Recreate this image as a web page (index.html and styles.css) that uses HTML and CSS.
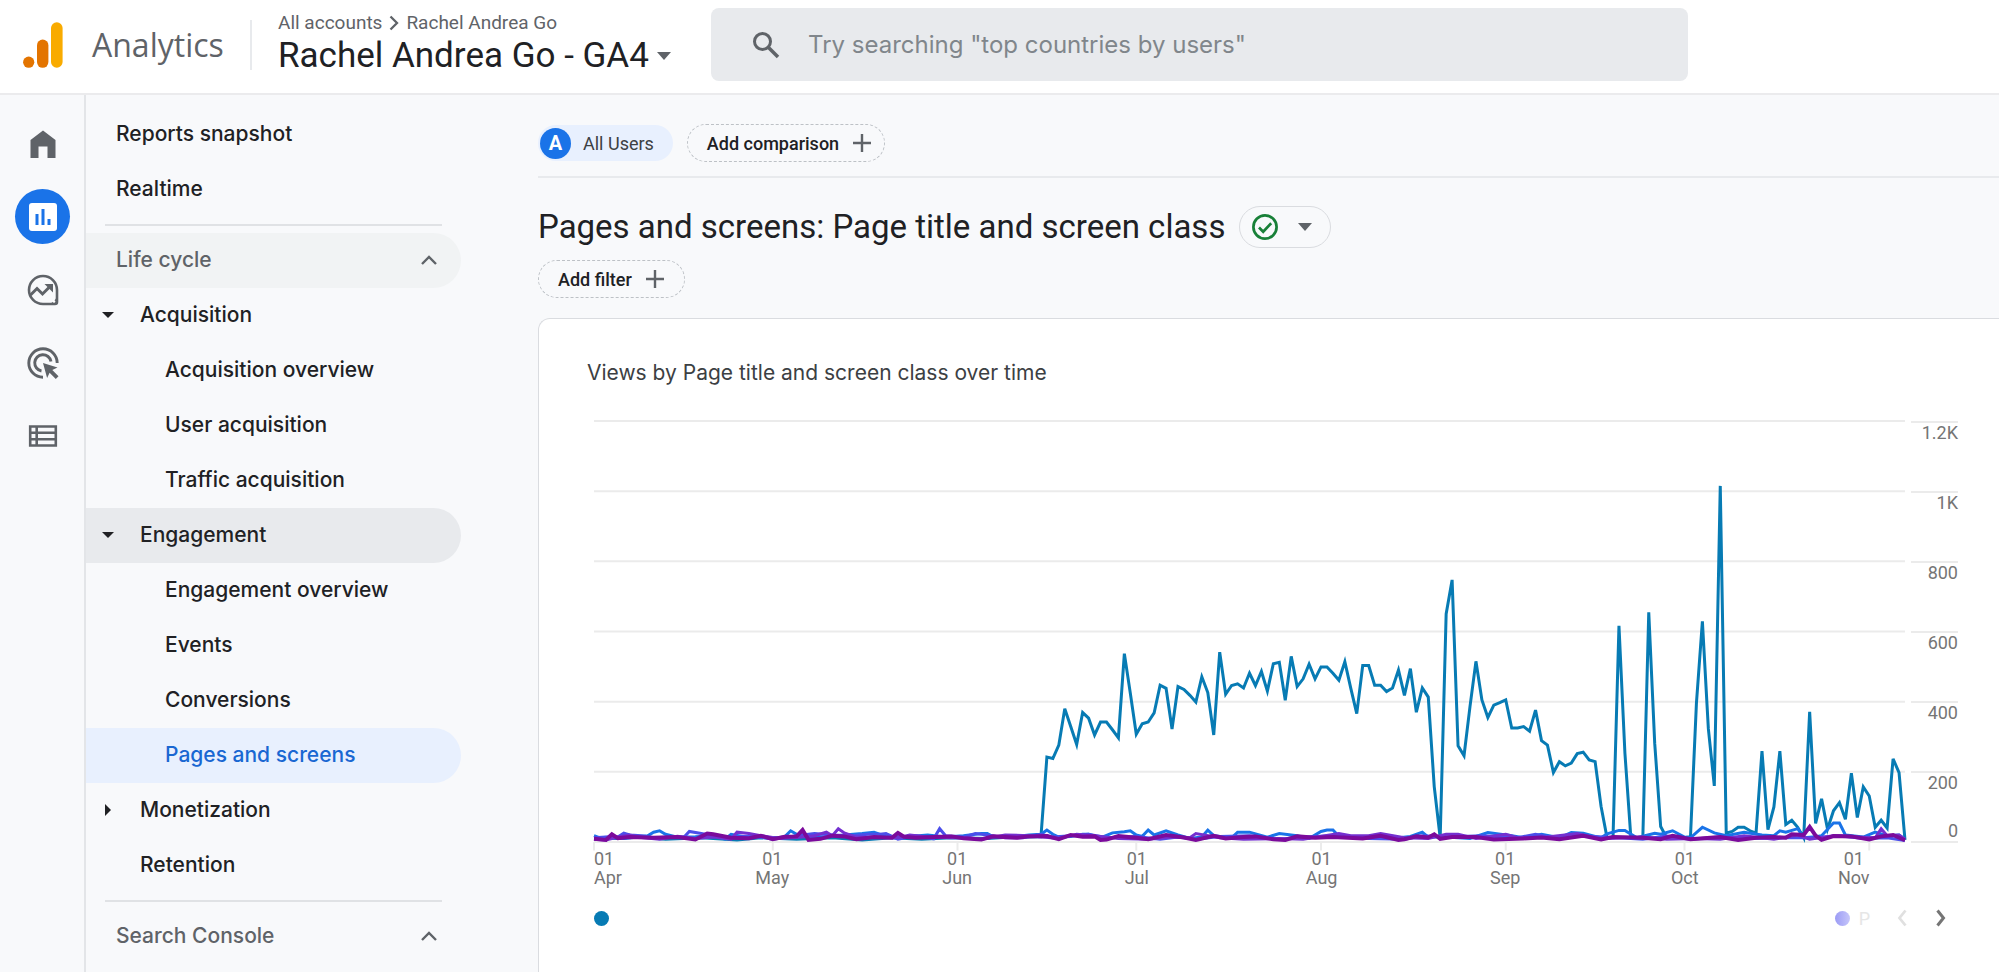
FILE: index.html
```html
<!DOCTYPE html>
<html lang="en">
<head>
<meta charset="utf-8">
<title>Analytics</title>
<link rel="stylesheet" href="styles.css">
</head>
<body>
<header class="topbar">
  <a class="brand" href="#">
    <svg class="logo" viewBox="0 0 40 46" aria-hidden="true"><circle cx="5.7" cy="40.2" r="5.6" fill="#e37400"/><rect x="14" y="17.5" width="11.4" height="28.3" rx="5.7" fill="#e37400"/><rect x="28" y="0.3" width="11.6" height="45.5" rx="5.8" fill="#f9ab00"/></svg>
    <span class="brand-name">Analytics</span>
  </a>
  <div class="account">
    <div class="crumbs"><span>All accounts</span><svg class="crumb-arrow" viewBox="0 0 10 16" aria-hidden="true"><path d="M1.5 1.5 8 8l-6.500 6.500" fill="none" stroke="#5f6368" stroke-width="2.300"/></svg><span>Rachel Andrea Go</span></div>
    <button class="property">Rachel Andrea Go - GA4<svg class="caret" viewBox="0 0 14 8" aria-hidden="true"><path d="M0 0h14L7 8z" fill="#5f6368"/></svg></button>
  </div>
  <label class="search">
    <svg class="search-icon" viewBox="0 0 28 28" aria-hidden="true"><circle cx="10.500" cy="10.500" r="8" fill="none" stroke="#5f6368" stroke-width="3"/><path d="M16.500 16.500 26 26" stroke="#5f6368" stroke-width="3.600"/></svg>
    <input type="search" aria-label="Search" placeholder="Try searching &quot;top countries by users&quot;">
  </label>
</header>
<div class="body">
  <nav class="rail" aria-label="Sections">
    <a class="rail-item" href="#" aria-label="Home"><svg class="rail-icon" viewBox="0 0 32 32"><path d="M3.500 12 16 2.500 28.500 12v18H20.500V18.500h-9V30h-8z" fill="#5f6368"/></svg></a>
    <a class="rail-item is-active" href="#" aria-label="Reports"><svg class="rail-icon" viewBox="0 0 32 32"><rect x="2" y="2" width="28" height="28" rx="3" fill="#fff"/><path d="M8.500 13h3v11h-3zM14.500 8h3v16h-3zM20.500 18h3v6h-3z" fill="#1a73e8"/></svg></a>
    <a class="rail-item" href="#" aria-label="Explore"><svg class="rail-icon" viewBox="0 0 32 32"><path d="M30 16v12q0 2-2 2H16A14 14 0 1 1 30 16z" fill="none" stroke="#5f6368" stroke-width="2.600"/><path d="M22 30q6-2 8-8v8z" fill="#5f6368"/><circle cx="27" cy="27.500" r="1.300" fill="#fff"/><path d="M3.500 21 10 14.500l5.500 5.500 7.500-7.500" fill="none" stroke="#5f6368" stroke-width="3"/><path d="M17.500 10H26v8.500z" fill="#5f6368"/></svg></a>
    <a class="rail-item" href="#" aria-label="Advertising"><svg class="rail-icon" viewBox="0 0 32 32"><g fill="none" stroke="#5f6368" stroke-width="2.900"><path d="M30.200 16A14.200 14.200 0 1 0 16 30.200"/><path d="M24 14.500A8.200 8.200 0 1 0 14.500 24"/></g><path d="m16 16 14.500 4.500-5.200 2.500 6.200 6.200-2.700 2.700-6.200-6.200-2.500 5.300z" fill="#5f6368"/></svg></a>
    <a class="rail-item" href="#" aria-label="Configure"><svg class="rail-icon" viewBox="0 0 32 32"><path d="M3.200 6.500h25.600v19H3.200zM3 12.800h26M3 19.200h26M9.700 6v20" fill="none" stroke="#5f6368" stroke-width="2.600"/></svg></a>
  </nav>
  <nav class="menu" aria-label="Reports">
    <a class="row" href="#">Reports snapshot</a>
    <a class="row" href="#">Realtime</a>
    <hr class="rule">
    <button class="row group shaded">Life cycle<svg class="chev" viewBox="0 0 16 10" aria-hidden="true"><path d="M1 9l7-7 7 7" fill="none" stroke="#5f6368" stroke-width="2.400"/></svg></button>
    <button class="row topic"><svg class="tri" viewBox="0 0 12 12" aria-hidden="true"><path d="M0 3h12L6 9z" fill="#202124"/></svg>Acquisition</button>
    <a class="row leaf" href="#">Acquisition overview</a>
    <a class="row leaf" href="#">User acquisition</a>
    <a class="row leaf" href="#">Traffic acquisition</a>
    <button class="row topic open"><svg class="tri" viewBox="0 0 12 12" aria-hidden="true"><path d="M0 3h12L6 9z" fill="#202124"/></svg>Engagement</button>
    <a class="row leaf" href="#">Engagement overview</a>
    <a class="row leaf" href="#">Events</a>
    <a class="row leaf" href="#">Conversions</a>
    <a class="row leaf current" href="#" aria-current="page">Pages and screens</a>
    <button class="row topic"><svg class="tri" viewBox="0 0 12 12" aria-hidden="true"><path d="M3 0v12l6-6z" fill="#202124"/></svg>Monetization</button>
    <a class="row sub" href="#">Retention</a>
    <hr class="rule">
    <button class="row group">Search Console<svg class="chev" viewBox="0 0 16 10" aria-hidden="true"><path d="M1 9l7-7 7 7" fill="none" stroke="#5f6368" stroke-width="2.400"/></svg></button>
  </nav>
  <main class="main">
    <div class="compare">
      <button class="segment"><span class="badge">A</span>All Users</button>
      <button class="add">Add comparison<svg class="plus" viewBox="0 0 20 20" aria-hidden="true"><path d="M10 1v18M1 10h18" stroke="#5f6368" stroke-width="2.400"/></svg></button>
    </div>
    <div class="heading">
      <h1>Pages and screens: Page title and screen class</h1>
      <button class="status" aria-label="Data quality"><svg class="check" viewBox="0 0 26 26" aria-hidden="true"><circle cx="13" cy="13" r="11.600" fill="none" stroke="#188038" stroke-width="2.700"/><path d="m7 13.500 4.200 4.200 8-8.500" fill="none" stroke="#188038" stroke-width="2.700"/></svg><svg class="caret" viewBox="0 0 14 8" aria-hidden="true"><path d="M0 0h14L7 8z" fill="#5f6368"/></svg></button>
    </div>
    <button class="add filter">Add filter<svg class="plus" viewBox="0 0 20 20" aria-hidden="true"><path d="M10 1v18M1 10h18" stroke="#5f6368" stroke-width="2.400"/></svg></button>
    <section class="card">
      <h2>Views by Page title and screen class over time</h2>
      <div class="chart">
        <div class="plot">
          <svg class="lines" viewBox="0 0 220 1200" preserveAspectRatio="none" role="img" aria-label="Views over time">
            <path class="grid" d="M0 0H220M0 200H220M0 400H220M0 600H220M0 800H220M0 1000H220M0 1200H220"/>
            <path class="grid" d="M0 1200v24M30 1200v24M61 1200v24M91 1200v24M122 1200v24M153 1200v24M183 1200v24M214 1200v24"/>
            <g transform="matrix(1 0 0 -1 0 1200)">
              <polyline class="s teal" points="0 12 4 10 8 14 12 8 18 12 24 6 28 12 34 8 40 12 45 6 50 12 55 8 60 12 66 10 70 14 75 15 76 242 77 238 78 276 79 380 80 329 81 278 82 369 83 353 84 305 85 342 86 342 87 320 88 297 89 537 90 424 91 307 92 337 93 342 94 368 95 447 96 438 97 322 98 443 99 435 100 418 101 399 102 471 103 426 104 305 105 541 106 421 107 446 108 451 109 439 110 481 111 446 112 486 113 430 114 508 115 512 116 404 117 529 118 443 119 465 120 507 121 465 122 499 123 499 124 481 125 461 126 514 127 438 128 366 129 503 130 503 131 447 132 447 133 429 134 439 135 490 136 418 137 494 138 370 139 439 140 413 141 158 142 12 143 650 144 747 145 274 146 246 147 386 148 515 149 405 150 355 151 390 152 397 153 405 154 325 155 325 156 329 157 316 158 376 159 289 160 276 161 198 162 229 163 217 164 225 165 252 166 256 167 234 168 229 169 101 170 12 171 12 172 616 173 253 174 12 175 10 176 10 177 655 178 281 179 44 180 12 182 10 184 15 185 396 186 629 187 323 188 160 189 1015 190 25 191 30 192 42 193 42 194 32 195 25 196 259 197 35 198 100 199 259 200 50 201 62 202 42 203 12 204 371 205 53 206 123 207 37 208 89 209 112 210 65 211 196 212 70 213 157 214 131 215 42 216 62 217 40 218 237 219 198 220 6"/>
              <polyline class="s blue" points="0 18 1 12 3 14 5 10 7 14 9 18 10 28 11 32 12 22 14 14 17 15 20 18 22 8 23 22 25 16 28 14 31 12 32 15 33 32 34 22 36 16 39 14 42 20 45 24 47 28 49 16 52 14 56 20 59 14 62 18 65 24 66 24 67 15 70 14 73 20 75 22 76 34 77 22 78 14 80 16 82 22 83 22 85 12 87 26 89 29 90 32 91 20 92 16 93 34 94 20 96 32 98 20 100 10 102 14 103 34 104 18 107 12 108 28 110 28 113 14 115 24 118 18 120 10 122 30 123 34 124 34 125 16 128 12 132 20 134 10 137 16 139 28 140 14 143 14 147 10 150 27 154 18 156 12 159 22 162 12 164 27 166 25 168 16 169 12 170 23 172 33 173 33 175 12 178 25 179 22 181 32 183 14 184 12 186 42 188 26 190 18 193 28 196 20 198 18 199 32 200 28 202 38 203 12 205 15 206 18 208 54 209 54 210 20 213 14 215 28 217 18 219 20 220 8"/>
              <polyline class="s indigo" points="0 12 2 14 4 14 5 25 6 20 8 18 10 12 13 14 15 12 16 30 18 24 20 18 22 12 25 16 28 14 30 8 34 18 37 24 40 20 43 18 46 22 48 22 49 24 51 8 54 18 57 9 58 38 59 18 62 14 64 24 66 20 69 12 72 12 75 22 77 14 80 18 83 22 86 12 91 16 95 8 98 14 101 8 105 16 110 18 115 8 119 14 124 18 130 10 136 8 139 18 143 14 149 18 155 12 158 22 162 9 165 18 172 12 176 8 180 17 184 8 189 14 194 10 200 12 205 12 209 18 213 10 217 12 220 4"/>
              <polyline class="s violet" points="0 8 2 6 4 14 6 20 8 13 11 8 14 16 17 10 20 14 23 8 24 28 26 24 28 18 31 10 34 13 37 18 39 28 40 18 41 38 42 26 44 14 48 12 51 12 53 20 56 14 60 12 63 12 65 8 69 20 73 18 78 10 81 22 84 18 88 10 93 8 97 14 100 12 101 24 105 12 109 8 115 10 119 8 125 24 127 18 130 18 132 24 136 12 140 10 143 22 145 22 148 10 153 22 155 12 160 14 165 24 169 9 176 14 180 8 185 10 189 8 193 18 198 8 202 20 204 8 208 18 212 14 215 12 216 38 217 18 219 20 220 8"/>
              <polyline class="s plum" points="0 9 2 6 3 22 4 11 6 14 10 12 14 14 17 7 19 24 20 22 23 12 26 11 28 18 30 8 32 15 34 16 35 34 36 6 38 9 40 18 42 16 44 8 47 14 50 12 51 26 52 15 54 12 57 14 60 16 62 11 65 7 67 16 71 12 73 16 76 17 78 8 80 20 82 15 84 16 85 6 86 7 88 17 91 12 93 8 96 20 99 13 101 6 104 18 106 10 109 14 111 16 114 8 116 6 118 16 121 12 124 14 129 10 132 18 135 6 136 8 138 16 140 13 141 22 142 9 144 14 148 14 151 7 156 10 159 13 162 8 166 18 169 7 171 14 176 12 179 8 181 18 184 8 189 14 192 6 195 12 198 14 200 12 201 22 203 20 204 43 205 18 206 6 208 17 211 16 214 7 216 16 218 20 220 5"/>
            </g>
          </svg>
          <div class="xaxis">
            <span class="tick first" style="left:0%">01<br>Apr</span>
            <span class="tick" style="left:13.600%">01<br>May</span>
            <span class="tick" style="left:27.700%">01<br>Jun</span>
            <span class="tick" style="left:41.400%">01<br>Jul</span>
            <span class="tick" style="left:55.500%">01<br>Aug</span>
            <span class="tick" style="left:69.500%">01<br>Sep</span>
            <span class="tick" style="left:83.200%">01<br>Oct</span>
            <span class="tick last" style="left:97.300%">01<br>Nov</span>
          </div>
        </div>
        <div class="yaxis"><span>1.2K</span><span>1K</span><span>800</span><span>600</span><span>400</span><span class="split">200<b>0</b></span></div>
      </div>
      <div class="legend">
        <span class="dot"></span>
        <div class="pager">
          <span class="next-item"><span class="dot faded"></span><span class="fade-text">P</span></span>
          <button class="page" aria-label="Previous" disabled><svg viewBox="0 0 12 18"><path d="M9.500 1.500 3.500 9l6 7.500" fill="none" stroke="#e0e0e0" stroke-width="2.800"/></svg></button>
          <button class="page" aria-label="Next"><svg viewBox="0 0 12 18"><path d="M2.500 1.500 8.500 9l-6 7.500" fill="none" stroke="#757575" stroke-width="3"/></svg></button>
        </div>
      </div>
    </section>
  </main>
</div>
</body>
</html>
```
FILE: styles.css
```css
* { box-sizing: border-box; }
body { margin: 0; height: 100vh; display: flex; flex-direction: column; overflow: hidden; background: #f8f9fb; color: #202124; font-family: Roboto, "Liberation Sans", sans-serif; font-size: 18px; }
button { font: inherit; color: inherit; background: none; border: 0; padding: 0; margin: 0; text-align: left; cursor: pointer; }
a { color: inherit; text-decoration: none; }
svg { display: block; flex: none; }

.topbar { flex: none; display: flex; align-items: center; height: 95px; padding: 0 24px 4px 23px; background: #fff; border-bottom: 2px solid #ebebed; }
.brand { display: flex; align-items: center; gap: 29px; width: 229px; height: 50px; border-right: 2px solid #e8eaed; }
.logo { width: 40px; height: 46px; }
.brand-name { font-family: "Open Sans", sans-serif; font-size: 32px; color: #5f6368; }
.account { width: 433px; margin-left: 26px; }
.crumbs { display: flex; align-items: center; gap: 7px; font-size: 19px; line-height: 22px; color: #5f6368; white-space: nowrap; }
.crumb-arrow { width: 10px; height: 16px; }
.property { display: flex; align-items: center; gap: 8px; font-size: 35px; line-height: 44px; white-space: nowrap; }
.caret { width: 14px; height: 8px; }
.search { flex: 0 1 977px; display: flex; align-items: center; gap: 28px; height: 73px; padding: 0 40px 0 41px; background: #e8eaed; border-radius: 8px; }
.search-icon { width: 28px; height: 28px; }
.search input { flex: 1; min-width: 0; padding: 0; border: 0; outline: 0; background: none; font: 24px Inter, sans-serif; color: #202124; }
.search input::placeholder { color: #80868b; opacity: 1; }

.body { flex: 1; min-height: 0; display: flex; }
.rail { flex: none; width: 86px; display: flex; flex-direction: column; align-items: center; gap: 18px; padding: 21px 0 0 1px; border-right: 2px solid #e3e5e8; }
.rail-item { display: grid; place-items: center; width: 55px; height: 55px; border-radius: 50%; }
.rail-item.is-active { background: #1a73e8; }
.rail-icon { width: 32px; height: 32px; }

.menu { flex: none; width: 452px; padding-top: 12px; font-family: Inter, sans-serif; font-size: 21px; font-weight: 500; }
.row { display: flex; align-items: center; width: 375px; height: 55px; padding: 0 0 2px 30px; border-radius: 0 28px 28px 0; }
.group { justify-content: space-between; padding-right: 24px; color: #5f6368; }
.topic { gap: 26px; padding-left: 16px; }
.sub { padding-left: 54px; }
.leaf { padding-left: 79px; }
.shaded { background: #f1f3f4; }
.open { background: #e8eaed; }
.current { background: #e8f0fe; color: #1967d2; }
.chev { width: 16px; height: 10px; }
.tri { width: 12px; height: 12px; }
.rule { width: 337px; margin: 7px 0 7px 19px; border: 0; border-top: 2px solid #e0e2e5; }

.main { flex: 1; min-width: 0; display: flex; flex-direction: column; align-items: flex-start; }
.compare { align-self: stretch; display: flex; align-items: center; gap: 14px; height: 83px; padding-top: 15px; border-bottom: 2px solid #e8eaed; }
.segment { display: flex; align-items: center; gap: 12px; height: 36px; padding: 0 19px 0 2px; border-radius: 18px; background: #e8f0fe; color: #3c4043; }
.badge { display: grid; place-items: center; width: 31px; height: 31px; border-radius: 50%; background: #1a73e8; color: #fff; font-size: 20px; font-weight: 700; }
.add { display: flex; align-items: center; gap: 13px; height: 38px; padding: 0 12px 0 19px; border: 1px dashed #bdc1c6; border-radius: 19px; font-weight: 500; }
.filter { padding-right: 19px; }
.plus { width: 20px; height: 20px; }
.heading { display: flex; align-items: center; gap: 14px; margin: 28px 0 12px; }
h1 { margin: 0; font-size: 33px; font-weight: 400; line-height: 42px; white-space: nowrap; }
.status { display: flex; align-items: center; gap: 20px; width: 92px; height: 42px; padding: 0 18px 0 12px; border: 1px solid #dadce0; border-radius: 21px; }
.check { width: 26px; height: 26px; }

.card { flex: 1; align-self: stretch; margin-top: 20px; padding: 39px 41px 0 48px; background: #fff; border: solid #dadce0; border-width: 1px 0 0 1px; border-radius: 12px 0 0 0; }
h2 { margin: 0; font-family: Inter, sans-serif; font-size: 21px; font-weight: 400; line-height: 30px; color: #3c4043; }
.chart { display: flex; gap: 6px; margin: 33px 0 0 7px; color: #757575; line-height: 19px; }
.plot { flex: 1; min-width: 0; }
.lines { width: 100%; height: 421px; overflow: visible; }
.lines * { vector-effect: non-scaling-stroke; }
.grid { stroke: #ebebeb; stroke-width: 2px; fill: none; }
.s { fill: none; stroke-width: 3px; }
.teal { stroke: #077bb4; }
.blue { stroke: #1a73e8; }
.indigo { stroke: #4b4eea; }
.violet { stroke: #7430d0; }
.plum { stroke: #7b0a9b; stroke-width: 4px; }
.xaxis { position: relative; height: 58px; }
.tick { position: absolute; top: 7px; transform: translateX(-50%); text-align: center; }
.tick.first { transform: none; text-align: left; }
.tick.last { transform: translateX(-100%); }
.yaxis { width: 47px; height: 422px; display: grid; grid-template-rows: repeat(6, 1fr); border-bottom: 2px solid #ebebeb; text-align: right; }
.yaxis span { border-top: 2px solid #ebebeb; }
.yaxis .split { display: flex; flex-direction: column; justify-content: space-between; }
.yaxis b { font-weight: 400; padding-bottom: 1px; }
.legend { display: flex; justify-content: space-between; align-items: center; height: 36px; padding: 0 11px 0 7px; }
.dot { display: block; width: 15px; height: 15px; border-radius: 50%; background: #077bb4; }
.pager { display: flex; align-items: center; }
.next-item { display: flex; align-items: center; gap: 9px; margin-right: 26px; }
.dot.faded { background: linear-gradient(90deg, #9c9cf5, #c6c6fa); }
.fade-text { color: #e6e6e6; }
.page { width: 12px; height: 18px; margin-left: 27px; }
.page:disabled { margin-left: 0; }
.page svg { width: 12px; height: 18px; }
```
